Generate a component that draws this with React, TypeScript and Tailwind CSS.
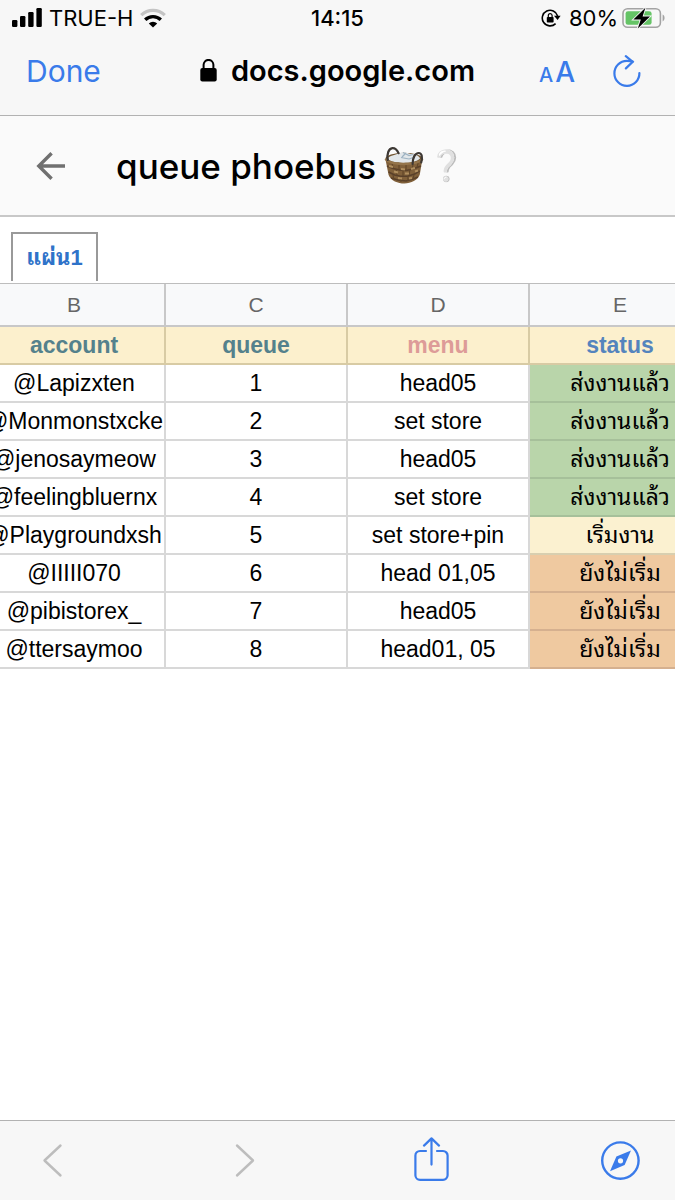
import { clsx } from "clsx";

type Status = "sent" | "started" | "waiting";

type QueueRow = {
  account: string;
  queue: number;
  menu: string;
  status: Status;
};

const ROWS: QueueRow[] = [
  { account: "@Lapizxten", queue: 1, menu: "head05", status: "sent" },
  { account: "@Monmonstxcke", queue: 2, menu: "set store", status: "sent" },
  { account: "@jenosaymeow", queue: 3, menu: "head05", status: "sent" },
  { account: "@feelingbluernx", queue: 4, menu: "set store", status: "sent" },
  { account: "@Playgroundxsh", queue: 5, menu: "set store+pin", status: "started" },
  { account: "@IIIII070", queue: 6, menu: "head 01,05", status: "waiting" },
  { account: "@pibistorex_", queue: 7, menu: "head05", status: "waiting" },
  { account: "@ttersaymoo", queue: 8, menu: "head01, 05", status: "waiting" }
];

const STATUS_LABEL: Record<Status, string> = {
  sent: "ส่งงานแล้ว",
  started: "เริ่มงาน",
  waiting: "ยังไม่เริ่ม"
};

const STATUS_CLASS: Record<Status, string> = {
  sent: "border-[#a6c09a] bg-[#b9d5aa]",
  started: "border-[#d8cfb0] bg-[#fbf1d0]",
  waiting: "border-[#d5b08f] bg-[#efc9a0]"
};

const HEADINGS = [
  { label: "account", color: "text-[#54818c]" },
  { label: "queue", color: "text-[#54818c]" },
  { label: "menu", color: "text-[#dd9b98]" },
  { label: "status", color: "text-[#5484bd]" }
];

const CELL = "overflow-hidden whitespace-nowrap border-b-2 border-r-2 p-0 text-center";

function SignalIcon() {
  return (
    <svg aria-hidden="true" className="h-5 w-[30px]" viewBox="0 0 30 20">
      <rect height="7" rx="1.2" width="5.4" x="0" y="12" />
      <rect height="11" rx="1.2" width="5.4" x="8" y="8" />
      <rect height="15" rx="1.2" width="5.4" x="16.2" y="4" />
      <rect height="19" rx="1.2" width="5.4" x="24.4" y="0" />
    </svg>
  );
}

function WifiIcon() {
  return (
    <svg aria-hidden="true" className="h-5 w-[26px]" fill="none" viewBox="0 0 26 20">
      <path d="M1.2 7.2a17 17 0 0 1 23.6 0" stroke="#c4c4c4" strokeWidth="3.2" />
      <path d="M5.2 11.8a11.2 11.2 0 0 1 15.6 0" stroke="#000" strokeWidth="3.4" />
      <path d="M13 19.6 8.8 15.4a6 6 0 0 1 8.4 0Z" fill="#000" />
    </svg>
  );
}

function RotationLockIcon() {
  return (
    <svg aria-hidden="true" className="h-5 w-5" fill="none" viewBox="0 0 20 20">
      <path d="M14.6 15.6A7.8 7.8 0 1 1 16.6 8" stroke="#000" strokeWidth="1.6" />
      <path d="M13 7.8h6.6L16.6 12Z" fill="#000" />
      <rect fill="#000" height="5.6" rx="0.8" width="6.8" x="5.8" y="9" />
      <path d="M7.3 9V7.6a1.9 1.9 0 0 1 3.8 0V9" stroke="#000" strokeWidth="1.2" />
    </svg>
  );
}

function BatteryIcon() {
  return (
    <svg aria-hidden="true" className="h-6 w-[43px]" fill="none" viewBox="0 0 43 24">
      <rect height="18.6" rx="4.6" stroke="#a3a3a3" strokeWidth="1.6" width="37.4" x="1" y="2.7" />
      <path d="M40.6 8.6c2.6 1 2.6 5.8 0 6.8Z" fill="#a3a3a3" />
      <rect fill="#65c466" height="13.6" rx="2.4" width="26" x="3.6" y="5.2" />
      <path d="M23.4 1.8 11.4 13.6h7.4l-3 8.8L28 10.4h-7.4Z" fill="#000" stroke="#f7f7f7" strokeWidth="1.8" paintOrder="stroke" />
    </svg>
  );
}

function LockIcon() {
  return (
    <svg aria-hidden="true" className="h-6 w-[17px]" fill="none" viewBox="0 0 17 24">
      <rect fill="#000" height="13.6" rx="2" width="16.4" x="0.3" y="9" />
      <path d="M3.6 10.4V5.8a4.9 4.9 0 0 1 9.8 0v4.6" stroke="#000" strokeWidth="2" />
    </svg>
  );
}

function ReloadIcon() {
  return (
    <svg aria-hidden="true" className="h-8 w-7" fill="none" stroke="currentColor" strokeLinecap="round" strokeWidth="2.2" viewBox="0 0 28 32">
      <path d="M26.4 18A12.5 12.5 0 1 1 13.9 5.800q3.200 0 5.800.8" />
      <path d="m12.800 1.200 6.900 5.600-6.800 6.600" />
    </svg>
  );
}

function BackArrowIcon() {
  return (
    <svg aria-hidden="true" className="h-7 w-[30px]" fill="none" stroke="#707070" strokeWidth="3.4" viewBox="0 0 30 28">
      <path d="M29 14H2.8M15.6 1.200 2.800 14l12.800 12.800" />
    </svg>
  );
}

function BasketIcon() {
  return (
    <svg aria-hidden="true" className="h-10 w-10" fill="none" viewBox="0 0 40 40">
      <path d="M1.4 13C5 17 34 17 38.4 13l-2.6 15.600C34 34 27 37.600 20.400 37.600S6.800 34.600 4.600 29Z" fill="#80603a" />
      <path d="m3 20 6 2.500 7 1.500 6 .5 7-1.500 8-3M4.600 26l6 3 6 1.200h7l7-2.200 5-3M7 32l7 2 8 1 7-2 5-2" stroke="#59402a" strokeWidth="1.5" />
      <path d="m8 17 1 5m6-3v5m7-5v6m7-7-1 6m6-7-1 5M12 23l1 6m6-5v6m7-7-1 6M9 29l1 5m6-4 1 6m7-6v5m6-6-1 4" stroke="#624729" strokeWidth="1.2" />
      <path d="m5 20 4 1m8 2 4 .5m6-.5 4-1M10 25.500l4 1m7 1h4m6-2 3-1M14 32l4 .5m7 0 3-.6" stroke="#b08f5f" strokeWidth="2" />
      <ellipse cx="20" cy="12.8" fill="#71542f" rx="18.6" ry="6" />
      <path d="M3.400 12.600c2-3 8-3.500 11-5 5-2 9-1 12 .5 5 0 9 2 9.600 4.500-5 5.400-27 6.400-32.600 0Z" fill="#e2e7ea" />
      <path d="m19 6.500 6 3 4-1m-12 3 8 1.500 6-2m-9-4-4 4" stroke="#9db2c2" strokeWidth="1.2" />
      <path d="M1.400 13c5.600 6.600 31.400 6.600 37.200 0" stroke="#94744a" strokeWidth="2.4" />
      <path d="M3.800 14C2.600 8 4.600 2.600 8.400 2.200c3.200-.2 5 2.400 6.200 5M28.600 18c0-6.400 2.400-11 6.200-11 3 0 4 4 2.400 9.400" stroke="#3d3834" strokeLinecap="round" strokeWidth="2.2" />
    </svg>
  );
}

function ShareIcon() {
  return (
    <svg aria-hidden="true" className="h-11 w-10" fill="none" stroke="currentColor" strokeLinecap="round" strokeLinejoin="round" strokeWidth="2.2" viewBox="0 0 40 44">
      <path d="M15 14H9a4.600 4.600 0 0 0-4.600 4.600v19.600A4.600 4.600 0 0 0 9 42.800h23a4.600 4.600 0 0 0 4.600-4.600V18.600A4.600 4.600 0 0 0 32 14h-6" />
      <path d="M20.500 27.600V1.400M13 8.600l7.500-7.200L28 8.600" />
    </svg>
  );
}

function CompassIcon() {
  return (
    <svg aria-hidden="true" className="h-10 w-10" fill="none" viewBox="0 0 40 40">
      <circle cx="20.4" cy="19.6" r="18.2" stroke="currentColor" strokeWidth="2.4" />
      <path d="M31 9.400 24.600 24 10 30.200l6.400-14.600Z" fill="currentColor" />
      <circle cx="20.5" cy="19.8" fill="#f7f7f7" r="2.6" />
    </svg>
  );
}

function BrowserBar() {
  return (
    <header className="border-b border-[#b2b2b2] bg-[#f7f7f7] pb-[9px]">
      <div className="grid h-9 grid-cols-[1fr_auto_1fr] items-center text-[22px] leading-6">
        <div className="flex items-center gap-[7px] pl-3">
          <SignalIcon />
          <span>TRUE-H</span>
          <WifiIcon />
        </div>
        <time className="font-medium">14:15</time>
        <div className="flex items-center justify-end gap-2 pr-[10px]">
          <RotationLockIcon />
          <div className="flex items-center gap-1">
            <span>80%</span>
            <BatteryIcon />
          </div>
        </div>
      </div>
      <nav className="grid h-[70px] grid-cols-[1fr_auto_1fr] items-center text-[#3a7bea]">
        <div className="pl-[26px]">
          <button className="text-[30px] leading-9" type="button">
            Done
          </button>
        </div>
        <div className="flex items-center gap-[14px] text-black">
          <LockIcon />
          <span className="text-[29px] font-semibold leading-9">docs.google.com</span>
        </div>
        <div className="flex items-center justify-end gap-[38px] pr-[34px]">
          <button aria-label="Text size" className="flex items-baseline gap-[2px] pt-1 font-medium leading-9" type="button">
            <span className="text-[20px]">A</span>
            <span className="text-[28px]">A</span>
          </button>
          <button aria-label="Reload" type="button">
            <ReloadIcon />
          </button>
        </div>
      </nav>
    </header>
  );
}

function DocumentHeader() {
  return (
    <div className="flex h-[101px] items-center gap-[50px] border-b-2 border-[#c8c8c8] bg-[#fafafa] pl-9">
      <button aria-label="Back" type="button">
        <BackArrowIcon />
      </button>
      <div className="flex items-center gap-2">
        <h1 className="text-[35px] font-medium leading-10">queue phoebus</h1>
        <div className="flex items-center gap-1">
          <BasketIcon />
          <span className="font-['DejaVu_Sans',sans-serif] text-[30px] leading-10 text-[#dedede]">❔</span>
        </div>
      </div>
    </div>
  );
}

function QueueTable() {
  return (
    <div className="overflow-hidden border-t border-[#bdbdbd]">
      <table className="-ml-4 w-[728px] table-fixed border-separate border-spacing-0 font-['Liberation_Sans','Noto_Sans_Thai_Looped','Loma','Waree',sans-serif] text-[23px] leading-9">
        <thead>
          <tr className="h-[43px]">
            {["B", "C", "D", "E"].map((letter) => (
              <th className="border-b-2 border-r-2 border-[#c8c8c8] bg-[#f8f9fa] p-0 text-[21px] font-normal text-[#666]" key={letter} scope="col">
                {letter}
              </th>
            ))}
          </tr>
          <tr className="h-[38px]">
            {HEADINGS.map((heading) => (
              <th className={clsx(CELL, "border-[#d8cba4] bg-[#fcf0cd]", heading.color)} key={heading.label} scope="col">
                {heading.label}
              </th>
            ))}
          </tr>
        </thead>
        <tbody>
          {ROWS.map((row) => (
            <tr className="h-[38px]" key={row.queue}>
              <td className={clsx(CELL, "border-[#d8d8d8]")}>{row.account}</td>
              <td className={clsx(CELL, "border-[#d8d8d8]")}>{row.queue}</td>
              <td className={clsx(CELL, "border-[#d8d8d8]")}>{row.menu}</td>
              <td className={clsx(CELL, STATUS_CLASS[row.status])}>{STATUS_LABEL[row.status]}</td>
            </tr>
          ))}
        </tbody>
      </table>
    </div>
  );
}

function Toolbar() {
  return (
    <footer className="mt-auto flex h-20 items-center justify-between border-t border-[#b2b2b2] bg-[#f7f7f7] pl-8 pr-[35px] text-[#3a7bea]">
      <button aria-label="Previous page" disabled type="button">
        <svg aria-hidden="true" className="h-10 w-10" fill="none" stroke="#bdbdbd" strokeLinecap="round" strokeLinejoin="round" strokeWidth="2.4" viewBox="0 0 40 40">
          <path d="M28.500 4.500 12.500 19.500l16 15" />
        </svg>
      </button>
      <button aria-label="Next page" disabled type="button">
        <svg aria-hidden="true" className="h-10 w-10" fill="none" stroke="#bdbdbd" strokeLinecap="round" strokeLinejoin="round" strokeWidth="2.4" viewBox="0 0 40 40">
          <path d="m16 4.500 16 15-16 15" />
        </svg>
      </button>
      <button aria-label="Share" className="pb-1" type="button">
        <ShareIcon />
      </button>
      <button aria-label="Open in Safari" type="button">
        <CompassIcon />
      </button>
    </footer>
  );
}

export default function App() {
  return (
    <div className="flex min-h-screen flex-col bg-white font-['Inter',sans-serif] text-black">
      <BrowserBar />
      <DocumentHeader />
      <main>
        <div className="flex px-[11px] pb-[2px] pt-[15px]">
          <button
            className="h-[49px] w-[87px] border-2 border-b-0 border-[#999] font-['Liberation_Sans','Noto_Sans_Thai_Looped','Loma','Waree',sans-serif] text-[22px] font-bold leading-6 text-[#2f73c9]"
            type="button"
          >
            แผ่น1
          </button>
        </div>
        <QueueTable />
      </main>
      <Toolbar />
    </div>
  );
}
